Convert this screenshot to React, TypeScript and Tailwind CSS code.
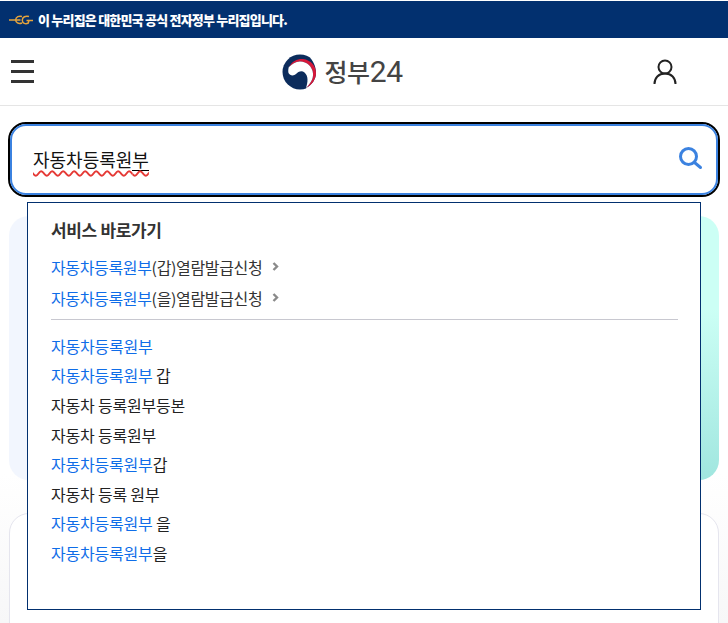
const kr = "font-['Noto_Sans_CJK_KR','Noto_Sans',sans-serif]";

const suggestions = [
  { hit: "자동차등록원부", rest: "" },
  { hit: "자동차등록원부", rest: " 갑" },
  { hit: "", rest: "자동차 등록원부등본" },
  { hit: "", rest: "자동차 등록원부" },
  { hit: "자동차등록원부", rest: "갑" },
  { hit: "", rest: "자동차 등록 원부" },
  { hit: "자동차등록원부", rest: " 을" },
  { hit: "자동차등록원부", rest: "을" },
];

function GovLogo() {
  return (
    <svg viewBox="0 0 36 36" className="w-[36px] h-[36px]">
      <circle cx="18" cy="18" r="17.500" fill="#0c2c5c" />
      <path d="M27 2C33 6 36.500 12 36.500 19c0 7-4 14-11.500 17l-1-2c6-3 10-9 10-15 0-7-3-12-7-17z" fill="#fff" />
      <path d="M7 13C10 7 16 4.500 21 5c8 1 13 7 13 14 0 6-4 12-10 15 4-4 7.500-9 7-14.500C30.500 13 25 7.500 18 7.500 13.500 7.500 10 10 7 13z" fill="#d6183a" />
      <path d="M7 13c3-3 6.500-5.500 11-5.500 7 0 12.500 5.500 13 12 .5 5.500-3 10.500-7 14.500 2-6 2.500-12-1.500-15.500-3-2.500-6.500-.5-8.500 1.500-2 2-6 2-7.500-1-.5-2-.2-4.500.5-6.500z" fill="#fff" />
    </svg>
  );
}

function EgLogo() {
  return (
    <svg viewBox="0 0 24 10" className="w-[24px] h-[10px]" fill="none" stroke="#e5a33c" strokeWidth="1.500">
      <path d="M0 5h7M17.500 5.500H24" />
      <path d="M13 1.500C10 .5 7 2 6.700 4.500 6.500 7.500 9.500 9.500 13 8M7 5h4.500" />
      <path d="M20 1.500C16.500 .5 13.500 2 13.300 5c-.2 3.500 3.500 4.500 6 3l.7-3" />
    </svg>
  );
}

function ServiceLink({ mid }: { mid: string }) {
  return (
    <div className="flex items-center h-[31px] text-[16px] tracking-[-0.35px]">
      <span className="text-[#0f6de8]">자동차등록원부</span>
      <span className="text-[#333]">({mid})열람발급신청</span>
      <svg viewBox="0 0 7 9" className="w-[7px] h-[9px] ml-[10px]" fill="none" stroke="#8a8a8a" strokeWidth="2.400">
        <path d="M1.500 1l3.500 3.500L1.500 8" />
      </svg>
    </div>
  );
}

export default function App() {
  return (
    <div className={`${kr} relative w-[728px] h-[623px] overflow-hidden bg-white`}>
      <div className="mt-px h-[37px] bg-[#02306f] flex items-center pl-[9px] gap-[5px]">
        <EgLogo />
        <span className="text-white text-[13px] font-extrabold tracking-[-0.8px]">이 누리집은 대한민국 공식 전자정부 누리집입니다.</span>
      </div>

      <header className="h-[68px] border-b border-[#e5e5e5] flex items-center justify-between pl-[11px] pr-[51px]">
        <div className="flex flex-col gap-[7.500px] w-[23px]">
          <span className="h-[2.500px] bg-[#333]" />
          <span className="h-[2.500px] bg-[#333]" />
          <span className="h-[2.500px] bg-[#333]" />
        </div>
        <div className="flex items-center gap-[6px] -ml-[2px]">
          <GovLogo />
          <span className="text-[#444] text-[25px] font-medium leading-none tracking-[-0.3px] flex items-baseline">
            정부<span className="font-['Roboto',sans-serif] font-normal text-[30px] tracking-[-0.5px]">24</span>
          </span>
        </div>
        <svg viewBox="0 0 24 26" className="w-[24px] h-[26px]" fill="none" stroke="#222" strokeWidth="2">
          <circle cx="12" cy="8" r="6.500" />
          <path d="M1.500 25c0-6 4-10.500 10.500-10.500S22.500 19 22.500 25" />
        </svg>
      </header>

      <div className="px-[8px] pt-[16px]">
        <div className="h-[75px] rounded-[18px] border-[2px] border-black bg-white">
          <div className="h-full rounded-[16px] border-[2px] border-[#3b82e0] flex items-center justify-between pl-[21px] pr-[13px]">
            <span className="text-[18px] text-[#111] underline decoration-wavy decoration-[#e53935] decoration-[1.500px] underline-offset-[3px]">
              자동차등록원
              <span className="inline-block leading-[22px] border-b border-black underline decoration-wavy decoration-[#e53935] decoration-[1.500px] underline-offset-[3px]">부</span>
            </span>
            <svg viewBox="0 0 24 24" className="w-[24px] h-[24px] mb-[3px]" fill="none" stroke="#3b82e0" strokeWidth="3" strokeLinecap="round">
              <circle cx="9.500" cy="10.500" r="8" />
              <path d="M15.500 16.500l6 5" />
            </svg>
          </div>
        </div>
      </div>

      <main className="px-[9px] pt-[19px] h-[426px] bg-[linear-gradient(180deg,#ffffff_65%,#f7f7f8_100%)]">
        <div className="h-[264px] rounded-[20px] bg-[linear-gradient(90deg,#f2f6fe_50%,transparent_50%),linear-gradient(180deg,#ccfff5_0%,#ccfff5_35%,#a0e6df_100%)]" />
        <div className="mt-[33px] h-[200px] rounded-t-[20px] border border-[#e5e5ee] bg-white" />
      </main>

      <div className="absolute left-[27px] top-[202px] w-[674px] h-[408px] bg-white border border-[#02306f] pl-[23px] pr-[22px] pt-[14px]">
        <div className="text-[17px] font-bold text-[#333] tracking-[-0.35px] leading-[26px] mb-[8px]">서비스 바로가기</div>
        <ServiceLink mid="갑" />
        <ServiceLink mid="을" />
        <div className="h-px bg-[#c8c8d0] mt-[6px] mb-[11px]" />
        <ul className="text-[16px] tracking-[-0.2px]">
          {suggestions.map((s, i) => (
            <li key={i} className="h-[29.600px] flex items-center whitespace-pre text-[#222]">
              <span className="text-[#0f6de8]">{s.hit}</span>
              {s.rest}
            </li>
          ))}
        </ul>
      </div>
    </div>
  );
}
